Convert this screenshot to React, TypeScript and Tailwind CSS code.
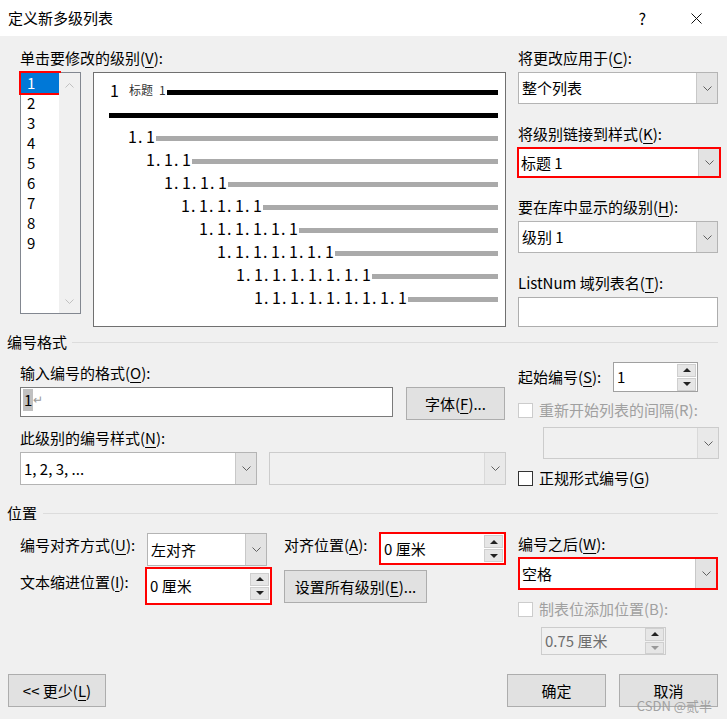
import React from "react";

const U = ({ children }: { children: React.ReactNode }) => (
  <span className="underline underline-offset-[3px] decoration-1">{children}</span>
);

function Chevron() {
  return (
    <svg width="9" height="5" viewBox="0 0 9 5">
      <polyline points="0.5,0.5 4.5,4.5 8.5,0.5" fill="none" stroke="#606060" strokeWidth="1" />
    </svg>
  );
}

function Tri({ up, color }: { up?: boolean; color: string }) {
  return (
    <svg width="8" height="4" viewBox="0 0 8 4">
      <polygon points={up ? "0,4 8,4 4,0" : "0,0 8,0 4,4"} fill={color} />
    </svg>
  );
}

function Select({ value, className, red, disabled }: { value?: string; className: string; red?: boolean; disabled?: boolean }) {
  const frame = red
    ? "border-2 border-[#ff0000] bg-white"
    : disabled
      ? "border border-[#cccccc] bg-[#f0f0f0]"
      : "border border-[#b4b4b4] bg-white";
  return (
    <div className={`flex ${frame} ${className}`}>
      <div className={`flex flex-1 items-center ${red ? "pl-[2px]" : "pl-[3px]"}`}>{value}</div>
      <div className={`flex w-[21px] items-center justify-center border-l ${disabled ? "border-[#d9d9d9] bg-[#e9e9e9]" : "border-[#c8c8c8] bg-[#e3e3e3]"}`}>
        <Chevron />
      </div>
    </div>
  );
}

function Spin({ value, className, red, disabled }: { value: string; className: string; red?: boolean; disabled?: boolean }) {
  const frame = red
    ? "border-2 border-[#ff0000] bg-white"
    : disabled
      ? "border border-[#cccccc] bg-[#f0f0f0] text-[#6d6d6d]"
      : "border border-[#a0a0a0] bg-white";
  return (
    <div className={`flex ${frame} ${className}`}>
      <div className="flex flex-1 items-center pl-[3px]">{value}</div>
      <div className="flex flex-col justify-center gap-[1px] pr-[1px]">
        <div className="flex h-[13px] w-[19px] items-center justify-center border border-[#cfcfcf] bg-[#e6e6e6]">
          <Tri up color="#222" />
        </div>
        <div className="flex h-[13px] w-[19px] items-center justify-center border border-[#cfcfcf] bg-[#e6e6e6]">
          <Tri color={disabled ? "#999" : "#222"} />
        </div>
      </div>
    </div>
  );
}

function Btn({ children, className }: { children: React.ReactNode; className: string }) {
  return (
    <div className={`flex items-center justify-center border border-[#adadad] bg-[#e1e1e1] ${className}`}>{children}</div>
  );
}

function Check({ label, disabled }: { label: React.ReactNode; disabled?: boolean }) {
  return (
    <div className="flex h-[16px] items-center">
      <div className={`h-[15px] w-[15px] border bg-white ${disabled ? "border-[#cccccc]" : "border-[#333333]"}`} />
      <div className={`ml-[6px] ${disabled ? "text-[#a0a0a0]" : ""}`}>{label}</div>
    </div>
  );
}

function Heading({ text, lineGap }: { text: string; lineGap: string }) {
  return (
    <div className="flex h-[20px] items-center pl-[7px] pr-[9px]">
      <span>{text}</span>
      <div className={`h-[1px] flex-1 bg-[#dcdcdc] ${lineGap}`} />
    </div>
  );
}

const levelIndent = ["ml-[19px]", "ml-[37px]", "ml-[55px]", "ml-[72px]", "ml-[90px]", "ml-[108px]", "ml-[127px]", "ml-[145px]"];

function Preview() {
  return (
    <div className="h-[255px] w-[413px] border border-[#707070] bg-white pl-[15px] pr-[7px] pt-[5px] text-[16px]">
      <div className="flex h-[23px] items-center">
        <span className="w-[20px] pl-[1px]">1</span>
        <span className="w-[30px] text-[12px] text-[#333]">标题</span>
        <span className="w-[8px] text-[12px] text-[#333]">1</span>
        <div className="mt-[5px] h-[5px] flex-1 bg-black" />
      </div>
      <div className="flex h-[23px] items-center">
        <div className="mt-[5px] h-[5px] flex-1 bg-black" />
      </div>
      {levelIndent.map((ml, i) => {
        const n = i + 2;
        return (
          <div key={n} className={`flex h-[23px] items-center ${ml}`}>
            {Array.from({ length: n - 1 }).map((_, k) => (
              <React.Fragment key={k}>
                <span className="w-[10px] shrink-0">1</span>
                <span className="w-[8px] shrink-0">.</span>
              </React.Fragment>
            ))}
            <span className="w-[10px] shrink-0">1</span>
            <div className="mt-[5px] h-[5px] flex-1 bg-[#aaaaaa]" />
          </div>
        );
      })}
    </div>
  );
}

function LevelList() {
  return (
    <div className="flex h-[242px] w-[61px] border border-[#828790]">
      <div className="w-[38px] bg-white">
        {[1, 2, 3, 4, 5, 6, 7, 8, 9].map((n) =>
          n === 1 ? (
            <div key={n} className="h-[20px] bg-[#0078d7] pl-[6px] text-white outline-2 outline-[#ff0000]">1</div>
          ) : (
            <div key={n} className="h-[20px] pl-[6px]">{n}</div>
          )
        )}
      </div>
      <div className="flex flex-1 flex-col items-center justify-between bg-[#f0f0f0] pb-[9px] pt-[10px]">
        <svg width="9" height="5" viewBox="0 0 9 5">
          <polyline points="0.5,4.5 4.5,0.5 8.5,4.5" fill="none" stroke="#c0c0c0" strokeWidth="1" />
        </svg>
        <svg width="9" height="5" viewBox="0 0 9 5">
          <polyline points="0.5,0.5 4.5,4.5 8.5,0.5" fill="none" stroke="#c0c0c0" strokeWidth="1" />
        </svg>
      </div>
    </div>
  );
}

export default function App() {
  return (
    <div className="relative h-[719px] w-[727px] overflow-hidden bg-[#f0f0f0] font-['Noto_Sans_CJK_SC','Noto_Sans',sans-serif] text-[15px] leading-[20px] text-black">
      {/* title bar */}
      <div className="flex h-[36px] items-center bg-white pl-[8px] pr-[25px]">
        <span>定义新多级列表</span>
        <span className="ml-auto mr-[45px] text-[16px]">?</span>
        <svg width="11" height="11" viewBox="0 0 11 11">
          <path d="M0.5 0.5 L10.5 10.5 M10.5 0.5 L0.5 10.5" stroke="#111" strokeWidth="1" />
        </svg>
      </div>

      {/* levels + preview */}
      <div className="flex pl-[20px] pt-[12px]">
        <div className="flex w-[486px] flex-col">
          <div>单击要修改的级别(<U>V</U>):</div>
          <div className="mt-[4px] flex items-start gap-[12px]">
            <LevelList />
            <Preview />
          </div>
        </div>
        <div className="ml-[12px] flex w-[200px] flex-col">
          <div>将更改应用于(<U>C</U>):</div>
          <Select className="mt-[4px] h-[32px] w-[200px]" value="整个列表" />
          <div className="mt-[20px]">将级别链接到样式(<U>K</U>):</div>
          <Select red className="-ml-[1px] mt-[3px] h-[31px] w-[204px]" value="标题 1" />
          <div className="mt-[19px]">要在库中显示的级别(<U>H</U>):</div>
          <Select className="mt-[4px] h-[32px] w-[200px]" value="级别 1" />
          <div className="mt-[20px]">ListNum 域列表名(<U>T</U>):</div>
          <div className="mt-[4px] h-[30px] w-[200px] border border-[#adadad] bg-white" />
        </div>
      </div>

      {/* 编号格式 */}
      <div className="mt-[5px]">
        <Heading text="编号格式" lineGap="ml-[5px]" />
      </div>
      <div className="flex pl-[20px]">
        <div className="flex w-[486px] flex-col">
          <div className="mt-[11px]">输入编号的格式(<U>O</U>):</div>
          <div className="mt-[4px] flex items-start">
            <div className="flex h-[30px] w-[373px] items-start border border-[#7a7a7a] bg-white pl-[2px] pt-[1px]">
              <span className="bg-[#c0c0c0] px-[1px] leading-[22px]">1</span>
              <span className="text-[12px] leading-[20px] text-[#999]">↵</span>
            </div>
            <Btn className="ml-[13px] h-[33px] w-[99px]">字体(<U>F</U>)...</Btn>
          </div>
          <div className="mt-[8px]">此级别的编号样式(<U>N</U>):</div>
          <div className="mt-[4px] flex">
            <Select className="h-[33px] w-[237px]" value="1, 2, 3, ..." />
            <div className="ml-[12px] flex flex-col">
              <Select disabled className="h-[33px] w-[237px]" />
            </div>
          </div>
        </div>
        <div className="ml-[12px] flex w-[200px] flex-col">
          <div className="mt-[10px] flex h-[30px] items-center">
            <div className="w-[95px]">起始编号(<U>S</U>):</div>
            <Spin className="h-[30px] w-[85px]" value="1" />
          </div>
          <div className="mt-[10px]">
            <Check disabled label="重新开始列表的间隔(R):" />
          </div>
          <Select disabled className="ml-[25px] mt-[9px] h-[32px] w-[176px]" />
          <div className="mt-[11px]">
            <Check label={<>正规形式编号(<U>G</U>)</>} />
          </div>
        </div>
      </div>

      {/* 位置 */}
      <div className="mt-[17px]">
        <Heading text="位置" lineGap="ml-[6px]" />
      </div>
      <div className="flex pl-[20px]">
        <div className="flex w-[486px] flex-col">
          <div className="mt-[9px] flex items-start">
            <div className="mt-[3px] w-[127px]">编号对齐方式(<U>U</U>):</div>
            <Select className="mt-[1px] h-[33px] w-[120px]" value="左对齐" />
            <div className="ml-[17px] mt-[3px] w-[95px]">对齐位置(<U>A</U>):</div>
            <Spin red className="h-[33px] w-[127px]" value="0 厘米" />
          </div>
          <div className="mt-[1px] flex items-start">
            <div className="mt-[5px] w-[125px]">文本缩进位置(<U>I</U>):</div>
            <Spin red className="h-[38px] w-[127px]" value="0 厘米" />
            <Btn className="ml-[12px] mt-[3px] h-[33px] w-[143px]">设置所有级别(<U>E</U>)...</Btn>
          </div>
        </div>
        <div className="ml-[12px] flex w-[200px] flex-col">
          <div className="mt-[11px]">编号之后(<U>W</U>):</div>
          <Select red className="mt-[3px] h-[33px] w-[200px]" value="空格" />
          <div className="mt-[11px]">
            <Check disabled label="制表位添加位置(B):" />
          </div>
          <Spin disabled className="ml-[23px] mt-[10px] h-[28px] w-[125px]" value="0.75 厘米" />
        </div>
      </div>

      {/* footer */}
      <div className="mt-[19px] flex pl-[8px] pr-[9px]">
        <Btn className="h-[33px] w-[98px]">&lt;&lt; 更少(<U>L</U>)</Btn>
        <Btn className="ml-auto h-[33px] w-[99px]">确定</Btn>
        <Btn className="ml-[13px] h-[33px] w-[99px]">取消</Btn>
      </div>

      <div className="absolute bottom-[5px] right-[15px] text-[13px] leading-[16px] text-[#9a9a9a] opacity-90">CSDN @贰半</div>
    </div>
  );
}
